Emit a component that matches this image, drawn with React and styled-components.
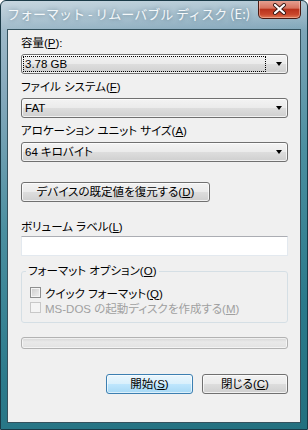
import React from "react";
import styled, { createGlobalStyle } from "styled-components";

const GlobalStyle = createGlobalStyle`
  html, body {
    margin: 0;
    padding: 0;
    background: #ffffff;
  }
  body {
    font-family: "Liberation Sans", "Noto Sans CJK JP", sans-serif;
  }
`;

const Window = styled.div`
  width: 308px;
  height: 430px;
  box-sizing: border-box;
  display: flex;
  flex-direction: column;
  padding: 0 6px 6px;
  border: 1px solid #1a3a47;
  border-radius: 6px 6px 0 0;
  background:
    linear-gradient(180deg, rgba(255, 255, 255, 0.35) 0%, rgba(255, 255, 255, 0) 7%),
    linear-gradient(165deg, #a9c1cf 0%, #86a9bc 18%, #4b8fa0 45%, #2b7a8b 75%, #23707f 100%);
  overflow: hidden;
`;

const TitleBar = styled.div`
  height: 28px;
  display: flex;
  justify-content: space-between;
  align-items: flex-start;
`;

const Title = styled.div`
  margin-top: 4px;
  font-family: "Noto Sans CJK JP", sans-serif;
  font-size: 13px;
  line-height: 18px;
  color: #f4f8fa;
  text-shadow: 0 0 4px rgba(40, 70, 90, 0.6);
  white-space: nowrap;
`;

const CloseButton = styled.div`
  margin-top: -1px;
  width: 43px;
  height: 19px;
  box-sizing: border-box;
  border: 1px solid #4a1a12;
  border-top: none;
  border-radius: 0 0 5px 5px;
  background: linear-gradient(180deg, #e7a597 0%, #d7735f 45%, #b9321c 52%, #c9472c 80%, #e07a55 100%);
  box-shadow: inset 0 0 0 1px rgba(255, 210, 200, 0.45);
  display: flex;
  align-items: center;
  justify-content: center;
`;

const Client = styled.div`
  flex: 1;
  display: flex;
  flex-direction: column;
  border: 1px solid #34525e;
  background: #f0f0f0;
  padding: 5px 12px 0 13px;
  font-size: 11.5px;
  font-feature-settings: "palt";
  color: #000;
`;

const Field = styled.div`
  display: flex;
  flex-direction: column;
  margin-bottom: 5px;
`;

const Label = styled.div`
  line-height: 16px;
  height: 16px;
  margin-bottom: ${(p) => p.$gap ?? 3}px;
  margin-top: ${(p) => p.$top ?? 0}px;
  white-space: nowrap;
  color: ${(p) => (p.$disabled ? "#a0a0a0" : "#000")};
`;

const Key = styled.span`
  text-decoration: underline;
  text-underline-offset: 1px;
`;

const Combo = styled.div`
  height: 20px;
  box-sizing: border-box;
  border: 1px solid #707070;
  border-radius: 3px;
  background: linear-gradient(180deg, #f3f3f3 0%, #ebebeb 48%, #dddddd 52%, #cfcfcf 100%);
  box-shadow: inset 0 0 0 1px rgba(255, 255, 255, 0.7);
  display: flex;
  align-items: center;
  padding: 0 5px 0 2px;
`;

const ComboText = styled.div`
  flex: 1;
  height: 14px;
  line-height: 14px;
  padding-left: 1px;
  margin-right: 11px;
  outline: ${(p) => (p.$focus ? "1px dotted #000" : "none")};
  outline-offset: 0;
`;

const Arrow = styled.div`
  width: 0;
  height: 0;
  border-left: 3.5px solid transparent;
  border-right: 3.5px solid transparent;
  border-top: 4px solid #000;
`;

const Button = styled.div`
  width: ${(p) => p.$w}px;
  height: 20px;
  box-sizing: border-box;
  border: 1px solid ${(p) => (p.$default ? "#3c7fb1" : "#707070")};
  border-radius: 3px;
  background: ${(p) =>
    p.$default
      ? "linear-gradient(180deg, #eaf6fd 0%, #d9f0fc 48%, #bee6fd 52%, #a7d9f5 100%)"
      : "linear-gradient(180deg, #f2f2f2 0%, #ebebeb 48%, #dddddd 52%, #cfcfcf 100%)"};
  box-shadow: inset 0 0 0 1px ${(p) => (p.$default ? "rgba(255,255,255,0.6)" : "rgba(255,255,255,0.7)")};
  display: flex;
  align-items: center;
  justify-content: center;
  white-space: nowrap;
  line-height: 14px;
`;

const RestoreButton = styled(Button)`
  margin-top: 15px;
`;

const TextInput = styled.div`
  height: 20px;
  box-sizing: border-box;
  background: #fff;
  border: 1px solid #e3e9ef;
  border-top-color: #abadb3;
`;

const Group = styled.fieldset`
  margin: 9px 0 0;
  padding: 8px 8px 7px;
  border: 1px solid #d5dfe5;
  border-radius: 3px;
  min-inline-size: 0;
`;

const Legend = styled.legend`
  padding: 0 2px;
  margin-left: -4px;
  line-height: 12px;
  height: 12px;
  white-space: nowrap;
`;

const CheckRow = styled.div`
  height: 15px;
  display: flex;
  align-items: center;
  gap: 4px;
  white-space: nowrap;
  color: ${(p) => (p.$disabled ? "#a0a0a0" : "#000")};
`;

const CheckBox = styled.div`
  width: 11px;
  height: 11px;
  box-sizing: border-box;
  border: 1px solid ${(p) => (p.$disabled ? "#c8c8c8" : "#8e8f8f")};
  background: ${(p) =>
    p.$disabled
      ? "#f4f4f4"
      : "linear-gradient(135deg, #cbcbcb 0%, #e2e2e2 60%, #f0f0f0 100%)"};
  box-shadow: inset 0 0 0 1px ${(p) => (p.$disabled ? "#f4f4f4" : "#f4f4f4")};
`;

const Progress = styled.div`
  margin-top: 14px;
  height: 12px;
  box-sizing: border-box;
  border: 1px solid #b2b2b2;
  border-radius: 3px;
  background: linear-gradient(180deg, #d6d6d6 0%, #e9e9e9 40%, #e2e2e2 100%);
  box-shadow: inset 0 0 0 1px rgba(255, 255, 255, 0.6);
`;

const Footer = styled.div`
  margin-top: 25px;
  display: flex;
  justify-content: flex-end;
  gap: 9px;
`;

const CloseGlyph = () => (
  <svg width="15" height="12" viewBox="0 0 15 12">
    <path
      d="M3 2 L12 10 M12 2 L3 10"
      stroke="#3a1a16"
      strokeWidth="4"
      strokeLinecap="round"
    />
    <path
      d="M3 2 L12 10 M12 2 L3 10"
      stroke="#ffffff"
      strokeWidth="2.2"
      strokeLinecap="round"
    />
  </svg>
);

export default function App() {
  return (
    <>
      <GlobalStyle />
      <Window>
        <TitleBar>
          <Title>フォーマット - リムーバブル ディスク (E:)</Title>
          <CloseButton>
            <CloseGlyph />
          </CloseButton>
        </TitleBar>
        <Client>
          <Field>
            <Label>
              容量(<Key>P</Key>):
            </Label>
            <Combo>
              <ComboText $focus>3.78 GB</ComboText>
              <Arrow />
            </Combo>
          </Field>
          <Field>
            <Label>
              ファイル システム(<Key>F</Key>)
            </Label>
            <Combo>
              <ComboText>FAT</ComboText>
              <Arrow />
            </Combo>
          </Field>
          <Field>
            <Label>
              アロケーション ユニット サイズ(<Key>A</Key>)
            </Label>
            <Combo>
              <ComboText>64 キロバイト</ComboText>
              <Arrow />
            </Combo>
          </Field>

          <RestoreButton $w={189}>
            デバイスの既定値を復元する(<Key>D</Key>)
          </RestoreButton>

          <Label $top={17} $gap={1}>
            ボリューム ラベル(<Key>L</Key>)
          </Label>
          <TextInput />

          <Group>
            <Legend>
              フォーマット オプション(<Key>O</Key>)
            </Legend>
            <CheckRow>
              <CheckBox />
              <span>
                クイック フォーマット(<Key>Q</Key>)
              </span>
            </CheckRow>
            <CheckRow $disabled>
              <CheckBox $disabled />
              <span>
                MS-DOS の起動ディスクを作成する(<Key>M</Key>)
              </span>
            </CheckRow>
          </Group>

          <Progress />

          <Footer>
            <Button $w={87} $default>
              開始(<Key>S</Key>)
            </Button>
            <Button $w={86}>
              閉じる(<Key>C</Key>)
            </Button>
          </Footer>
        </Client>
      </Window>
    </>
  );
}
